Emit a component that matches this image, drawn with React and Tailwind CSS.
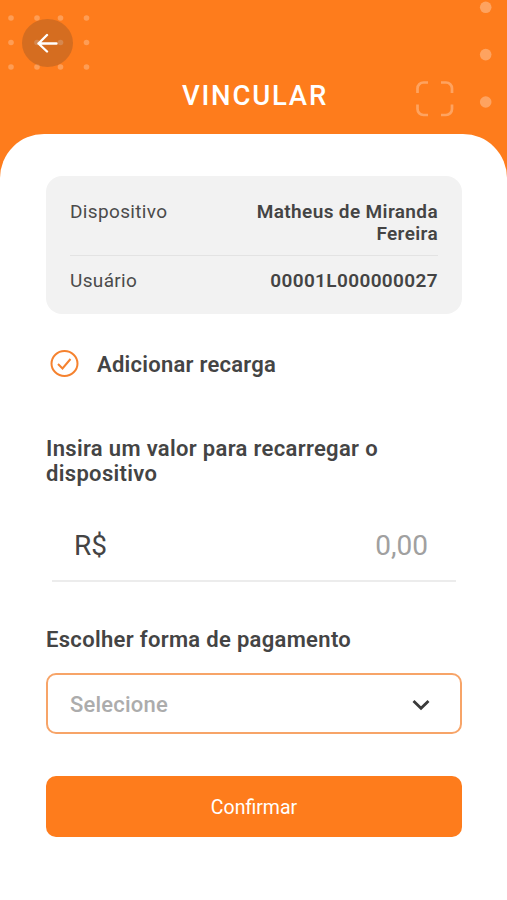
import React, { useState } from 'react';

const DOT_COLUMNS = [11, 37, 60.5, 86.5];
const DOT_ROWS = [18, 42.5, 67];

const HeaderDecoration = () => (
    <svg className="absolute inset-0 pointer-events-none" width="507" height="134" fill="#fff" aria-hidden="true">
        {DOT_ROWS.map((y) =>
            DOT_COLUMNS.map((x) => <circle key={`${x}-${y}`} cx={x} cy={y} r="2.8" fillOpacity="0.25" />)
        )}
        {[7.3, 54.6, 102].map((y) => (
            <circle key={y} cx="485.7" cy={y} r="5.8" fillOpacity="0.3" />
        ))}
        <path
            d="M417.5 93v-4.5a6 6 0 0 1 6-6H428M441 82.5h5a6 6 0 0 1 6 6V93M452 104.5v4.5a6 6 0 0 1-6 6h-5M428 115h-4.5a6 6 0 0 1-6-6V104.5"
            fill="none"
            stroke="#fff"
            strokeOpacity="0.3"
            strokeWidth="2.7"
        />
    </svg>
);

const InfoRow = ({ label, value }) => (
    <div className="flex justify-between text-[19px] leading-[22px] text-[#4b4b4b]">
        <span className="tracking-[0.35px]">{label}</span>
        <span className="w-[200px] text-right font-semibold tracking-[0.37px] text-[#444]">{value}</span>
    </div>
);

const App = () => {
    const [recharge, setRecharge] = useState(true);
    const [amount, setAmount] = useState('');

    return (
        <div className="w-[507px] h-[900px] flex flex-col overflow-hidden bg-[#fe7c1c] font-[Roboto,sans-serif]">
            {/* Header */}
            <header className="relative h-[134px] shrink-0 pt-[19px]">
                <HeaderDecoration />
                <button className="relative ml-[22px] flex h-12 w-[51px] items-center justify-center rounded-[50%] bg-[#333]/20">
                    <svg width="22" height="20" viewBox="0 0 22 20" fill="none" stroke="#fff" strokeWidth="2.4" strokeLinecap="round" strokeLinejoin="round">
                        <path d="M19.5 10.5H1.5M10 2L1.5 10.5L10 18.5" />
                    </svg>
                </button>
                <h1 className="mt-[13px] pl-[3px] text-center text-[27.5px] leading-[32px] font-medium tracking-[1.8px] text-white">VINCULAR</h1>
            </header>

            <main className="flex-1 rounded-t-[44px] bg-white pr-[45px] pl-[46px] pt-[42.3px]">
                {/* Device info */}
                <section className="h-[138px] rounded-[16px] bg-[#f2f2f2] px-6 pt-[24.7px]">
                    <InfoRow label="Dispositivo" value="Matheus de Miranda Fereira" />
                    <div className="mt-[10px] mb-[14px] h-px bg-[#e3e3e3]" />
                    <InfoRow label="Usuário" value="00001L000000027" />
                </section>

                <button onClick={() => setRecharge(!recharge)} className="mt-[34.7px] ml-1 flex h-[30px] items-center">
                    <svg width="29" height="28" viewBox="0 0 29 28" fill="none" stroke="#f5822f" strokeWidth="2">
                        <ellipse cx="14.5" cy="13.5" rx="13" ry="12.5" />
                        {recharge && <path d="M8 14L12.5 18.5L20.5 9" />}
                    </svg>
                    <span className="mt-[2px] ml-[18px] text-[22px] leading-[26px] font-semibold tracking-[0.25px] text-[#444]">Adicionar recarga</span>
                </button>

                <p className="mt-[57px] text-[22px] leading-[25px] font-semibold tracking-[0.33px] text-[#444]">
                    Insira um valor para recarregar o dispositivo
                </p>

                {/* Amount */}
                <div className="mx-[6px] mt-[31px] flex h-[65px] items-center justify-between border-b-2 border-[#ececec] pr-[28px] pb-[4px] pl-[22px] text-[28px] leading-[32px]">
                    <span className="text-[#444]">R$</span>
                    <input
                        value={amount}
                        onChange={(e) => setAmount(e.target.value)}
                        placeholder="0,00"
                        className="w-[160px] text-right outline-none placeholder:text-[#a0a0a0]"
                    />
                </div>

                <h2 className="mt-[45px] text-[22px] leading-[26px] font-semibold tracking-[0.32px] text-[#444]">Escolher forma de pagamento</h2>

                <button className="mt-[20.3px] flex h-[61px] w-full items-center justify-between rounded-[10px] border-2 border-[#f7a468] pt-[2px] pr-[30px] pl-[22px]">
                    <span className="text-[22px] leading-[26px] font-medium tracking-[0.2px] text-[#acacac]">Selecione</span>
                    <svg width="18" height="12" viewBox="0 0 18 12" fill="none" stroke="#3a3a3a" strokeWidth="2.8">
                        <path d="M1.5 2L9 9.3L16.5 2" />
                    </svg>
                </button>

                <button className="mt-[41.7px] h-[61px] w-full rounded-[10px] bg-[#fe7c1c] pt-[4px] text-[19.5px] leading-[22px] text-white">Confirmar</button>
            </main>
        </div>
    );
};

export default App;
